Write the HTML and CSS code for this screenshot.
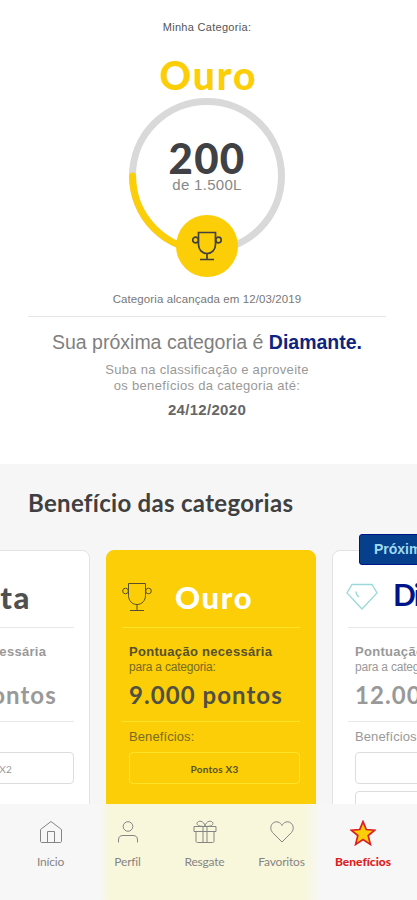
FILE: index.html
```html
<!DOCTYPE html>
<html lang="pt-BR">

<head>
  <meta charset="UTF-8">
  <meta name="viewport" content="width=device-width, initial-scale=1.0">
  <title>Benefícios</title>
  <link rel="stylesheet" href="styles.css">
</head>

<body>
  <svg class="sprite" width="0" height="0">
    <symbol id="trophy" viewBox="0 0 30 30">
      <path d="M6.500 1.500h17v12c0 5-3.500 9-8.500 9s-8.500-4-8.500-9zM15 22.500v6M8 28.500h14" />
      <circle cx="3.500" cy="9" r="2.800" />
      <circle cx="26.500" cy="9" r="2.800" />
    </symbol>
  </svg>

  <section class="status">
    <p class="label">Minha Categoria:</p>
    <h1 class="category">Ouro</h1>
    <div class="progress">
      <svg class="ring" viewBox="0 0 156 156">
        <circle cx="78" cy="78" r="74.500" stroke="#d9d9d9" />
        <path d="M3.600 78A74.500 74.500 0 0 0 78 152.500" stroke="#fbce07" stroke-linecap="round" />
      </svg>
      <strong class="points">200</strong>
      <span class="goal">de 1.500L</span>
      <div class="medal"><svg><use href="#trophy" /></svg></div>
    </div>
    <p class="reached">Categoria alcançada em 12/03/2019</p>
    <hr>
    <p class="next">Sua próxima categoria é <strong>Diamante.</strong></p>
    <p class="hint">Suba na classificação e aproveite<br>os benefícios da categoria até:</p>
    <p class="deadline">24/12/2020</p>
  </section>

  <section class="benefits">
    <h2>Benefício das categorias</h2>
    <div class="track">
      <article class="card silver">
        <header><h3>Prata</h3></header>
        <p class="needed">Pontuação necessária</p>
        <p class="for">&nbsp;</p>
        <p class="total">3.000 pontos</p>
        <p class="list-title">&nbsp;</p>
        <div class="perk">Pontos X2</div>
      </article>
      <article class="card gold">
        <header>
          <svg><use href="#trophy" /></svg>
          <h3>Ouro</h3>
        </header>
        <p class="needed">Pontuação necessária</p>
        <p class="for">para a categoria:</p>
        <p class="total">9.000 pontos</p>
        <p class="list-title">Benefícios:</p>
        <div class="perk">Pontos X3</div>
      </article>
      <article class="card diamond">
        <span class="tag">Próxima</span>
        <header>
          <svg viewBox="0 0 32 28">
            <path d="M6 1.500h20l5 8.500-15 16L1 10zM10 8.500c0 2.500 1 4 3 5.500" />
          </svg>
          <h3>Diamante</h3>
        </header>
        <p class="needed">Pontuação necessária</p>
        <p class="for">para a categoria:</p>
        <p class="total">12.000 pontos</p>
        <p class="list-title">Benefícios:</p>
        <div class="perk"></div>
        <div class="perk second">Checkup</div>
      </article>
    </div>
  </section>

  <nav class="tabs">
    <a class="tab">
      <svg viewBox="0 0 24 24"><path d="M1.500 9.500 12 1.500l10.500 8V21c0 1-.5 1.500-1.500 1.500H3c-1 0-1.500-.5-1.500-1.500zM8.500 22.500v-11h7v11" /></svg>
      <span>Início</span>
    </a>
    <a class="tab">
      <svg viewBox="0 0 24 24"><circle cx="12" cy="6.500" r="4.800" /><path d="M2.500 22.500v-2.500c0-3 1.500-4.500 4.500-4.500h10c3 0 4.500 1.500 4.500 4.500v2.500" /></svg>
      <span>Perfil</span>
    </a>
    <a class="tab">
      <svg viewBox="0 0 24 24"><path d="M1 6.500h22v5H1zM3 11.500v9.500c0 1 .5 1.500 1.500 1.500h15c1 0 1.500-.5 1.500-1.500v-9.500M10 6.500v16M14 6.500v16M12 6.500C5 6.500 4 4.500 4 3.500 4 .5 11-.5 12 6.500c1-7 8-6 8-3 0 1-1 3-8 3" /></svg>
      <span>Resgate</span>
    </a>
    <a class="tab">
      <svg viewBox="0 0 24 24"><path d="M12 22 2.500 12.500C-2 7 3 .5 8 2c2 .6 3.300 2 4 3.500C12.700 4 14 2.600 16 2c5-1.500 10 5 5.500 10.500z" /></svg>
      <span>Favoritos</span>
    </a>
    <a class="tab active">
      <svg viewBox="0 0 24 24"><path d="m12 1.500 3 7.300 7.800.6-6 5 2 8.100-6.800-4.400-6.800 4.400 2-8.100-6-5 7.800-.6z" /></svg>
      <span>Benefícios</span>
    </a>
  </nav>
</body>

</html>
```
FILE: styles.css
```css
* {
  box-sizing: border-box;
  margin: 0;
  padding: 0;
}

body {
  width: 417px;
  height: 900px;
  overflow: hidden;
  font-family: "Liberation Sans", Arial, sans-serif;
  color: #404040;
  background: #fff;
}

svg {
  fill: none;
  stroke: currentColor;
}

.sprite {
  position: absolute;
}

p,
h1,
h2,
h3,
span {
  white-space: nowrap;
}

/* current category */
.status {
  height: 464px;
  padding: 19px 3px 0 0;
  display: flex;
  flex-direction: column;
  align-items: center;
  text-align: center;
}

.label {
  font-size: 11px;
  line-height: 17px;
  letter-spacing: 0.3px;
  color: #555;
}

.category {
  margin-top: 18px;
  height: 44px;
  padding-left: 3px;
  font: 900 39px/43px Lato, sans-serif;
  letter-spacing: 2px;
  color: #fbce07;
}

.progress {
  position: relative;
  width: 156px;
  height: 179px;
  padding-top: 43px;
  display: flex;
  flex-direction: column;
  align-items: center;
}

.ring {
  position: absolute;
  top: 0;
  left: 0;
  width: 156px;
  height: 156px;
  stroke-width: 7;
}

.points {
  font: 900 42px/34px Lato, sans-serif;
  letter-spacing: 1.3px;
  color: #404144;
}

.goal {
  margin-top: 2px;
  font-size: 15px;
  line-height: 16px;
  letter-spacing: 0.3px;
  color: #888;
}

.medal {
  position: absolute;
  top: 117px;
  left: 47px;
  width: 62px;
  height: 62px;
  display: flex;
  align-items: center;
  justify-content: center;
  border-radius: 50%;
  background: #fbce07;
}

.medal svg {
  width: 30px;
  height: 30px;
  stroke-width: 1.7;
}

.reached {
  margin-top: 14px;
  font-size: 11.500px;
  line-height: 17px;
  letter-spacing: 0.1px;
  color: #777;
}

hr {
  width: 358px;
  margin-top: 8px;
  border: 0;
  border-top: 1px solid #e6e6e6;
}

.next {
  margin-top: 13px;
  font-size: 19.500px;
  line-height: 24px;
  color: #808080;
}

.next strong {
  color: #0d2480;
}

.hint {
  margin-top: 8px;
  font-size: 13px;
  line-height: 16px;
  letter-spacing: 0.3px;
  color: #999;
}

.deadline {
  margin-top: 7px;
  font-size: 15px;
  font-weight: bold;
  line-height: 18px;
  letter-spacing: 0.3px;
  color: #666;
}

/* category cards */
.benefits {
  height: 340px;
  padding-top: 24px;
  overflow: hidden;
  background: #f6f6f6;
}

h2 {
  margin-left: 28px;
  font: 700 24px/30px Lato, sans-serif;
  letter-spacing: 0.3px;
  font-variant-ligatures: none;
  color: #404040;
}

.track {
  display: flex;
  gap: 16px;
  width: 662px;
  margin: 32px 0 0 -120px;
}

.card {
  position: relative;
  flex: 0 0 210px;
  height: 290px;
  padding: 0 15px;
  border: 1px solid #e3e3e3;
  border-radius: 8px;
  background: #fff;
  color: #999;
}

.card header {
  display: flex;
  align-items: center;
  height: 77px;
  padding-top: 16px;
  border-bottom: 1px solid #e8e8e8;
}

.card h3 {
  font: 900 31px/36px Lato, sans-serif;
  letter-spacing: 1.6px;
  color: #505050;
}

.card header svg {
  width: 30px;
  height: 30px;
}

.card p {
  margin-left: 7px;
}

.needed {
  margin-top: 15px;
  font-size: 13px;
  font-weight: bold;
  line-height: 17px;
  letter-spacing: 0.3px;
}

.for {
  font-size: 12px;
  line-height: 15px;
  letter-spacing: -0.2px;
}

.card .total {
  margin: 8px 0 0;
  padding-left: 7px;
  height: 39px;
  border-bottom: 1px solid #e8e8e8;
  font: 700 24px/24px Lato, sans-serif;
  letter-spacing: 1.05px;
}

.list-title {
  margin-top: 7px;
  font-size: 13px;
  line-height: 16px;
  letter-spacing: 0.1px;
}

.perk {
  height: 32px;
  margin: 7px 0 0 7px;
  border: 1px solid #ddd;
  border-radius: 4px;
  font: 700 10px/32px Lato, sans-serif;
  letter-spacing: 0.2px;
  text-align: center;
}

.silver .perk {
  font-weight: 400;
}

.silver h3 {
  margin-left: 53px;
}

.gold {
  border-color: #fbce07;
  background: #fbce07;
  color: #57512f;
}

.card.gold header,
.card.gold .total,
.gold .perk {
  border-color: #ffe329;
}

.gold .for,
.gold .list-title {
  color: #786b26;
}

.card.gold h3 {
  margin-left: 23px;
  color: #fff;
}

.gold .total {
  color: #505043;
}

.diamond header svg {
  flex: none;
  width: 32px;
  height: 28px;
  margin-left: -2px;
  stroke-width: 1.3;
  color: #9bd8d9;
}

.card.diamond h3 {
  margin-left: 15px;
  margin-top: -6px;
  font-size: 30px;
  font-weight: 700;
  letter-spacing: -1.8px;
  color: #001489;
}

.tag {
  position: absolute;
  top: -17px;
  left: 26px;
  width: 110px;
  padding-left: 14px;
  border: 1px solid #001489;
  border-radius: 3px;
  background: #06408c;
  color: #9fdaf0;
  font-size: 14px;
  font-weight: bold;
  line-height: 29px;
}

.perk.second {
  line-height: 30px;
}

/* bottom bar, tinted under the gold card */
.tabs {
  display: flex;
  height: 96px;
  padding: 16px 11px 0 12px;
  background: linear-gradient(to right, #f7f7f7 100px, #f8f7dc 109px, #f8f7dc 304px, #f7f7f7 321px);
}

.tab {
  flex: 0 0 77px;
  display: flex;
  flex-direction: column;
  align-items: center;
  font: 400 12px/16px Lato, sans-serif;
  font-variant-ligatures: none;
  letter-spacing: -0.2px;
  color: #858585;
}

.tab:last-child {
  flex-basis: 86px;
}

.tab svg {
  width: 24px;
  height: 24px;
  margin-bottom: 10px;
}

.tab.active {
  font-weight: 900;
  letter-spacing: 0;
  color: #dd1d21;
}

.tab.active svg {
  width: 26px;
  height: 26px;
  margin-bottom: 8px;
  fill: #fbce07;
  stroke-width: 1.6;
}
```
